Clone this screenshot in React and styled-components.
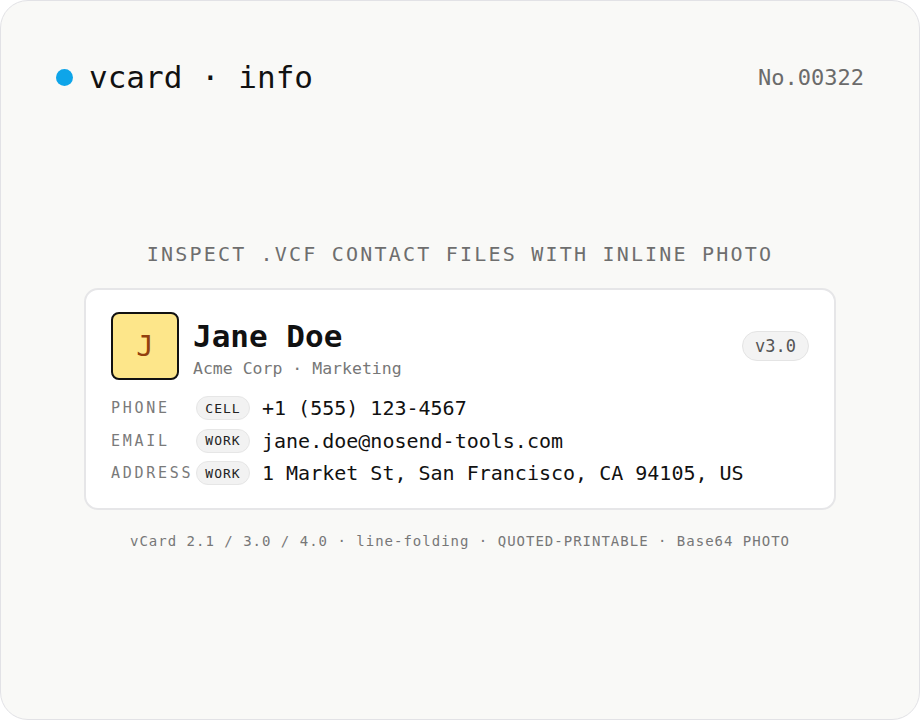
import styled, { createGlobalStyle } from "styled-components";

const mono = `"DejaVu Sans Mono", "Liberation Mono", monospace`;

const GlobalStyle = createGlobalStyle`
  html, body {
    margin: 0;
    padding: 0;
    background: #ffffff;
  }
  * {
    box-sizing: border-box;
  }
`;

const rows = [
  { label: "PHONE", tag: "CELL", value: "+1 (555) 123-4567" },
  { label: "EMAIL", tag: "WORK", value: "jane.doe@nosend-tools.com" },
  { label: "ADDRESS", tag: "WORK", value: "1 Market St, San Francisco, CA 94105, US" },
];

export default function App() {
  return (
    <>
      <GlobalStyle />
      <Frame>
        <Header>
          <Brand>
            <Dot />
            vcard · info
          </Brand>
          <Serial>No.00322</Serial>
        </Header>

        <Main>
          <Tagline>INSPECT .VCF CONTACT FILES WITH INLINE PHOTO</Tagline>

          <Card>
            <CardTop>
              <Avatar>J</Avatar>
              <Identity>
                <Name>Jane Doe</Name>
                <Org>Acme Corp · Marketing</Org>
              </Identity>
              <Version>v3.0</Version>
            </CardTop>

            <Fields>
              {rows.map((r) => (
                <Field key={r.label}>
                  <FieldLabel>{r.label}</FieldLabel>
                  <Tag>{r.tag}</Tag>
                  <FieldValue>{r.value}</FieldValue>
                </Field>
              ))}
            </Fields>
          </Card>

          <Footnote>
            vCard 2.1 / 3.0 / 4.0 · line-folding · QUOTED-PRINTABLE · Base64 PHOTO
          </Footnote>
        </Main>
      </Frame>
    </>
  );
}

const Frame = styled.div`
  width: 920px;
  height: 720px;
  background: #f9f9f7;
  border: 1px solid #e2e2e6;
  border-radius: 28px;
  padding: 57px 55px 0;
  font-family: ${mono};
  color: #111111;
  display: flex;
  flex-direction: column;
`;

const Header = styled.header`
  display: flex;
  align-items: center;
  justify-content: space-between;
  height: 38px;
`;

const Brand = styled.div`
  display: flex;
  align-items: center;
  gap: 16px;
  font-size: 31px;
  line-height: 38px;
  color: #111111;
`;

const Dot = styled.span`
  width: 17px;
  height: 17px;
  border-radius: 50%;
  background: #0ea5e9;
`;

const Serial = styled.div`
  font-size: 22px;
  color: #6b6b6b;
`;

const Main = styled.main`
  margin-top: 146px;
  display: flex;
  flex-direction: column;
  align-items: center;
`;

const Tagline = styled.div`
  font-size: 20px;
  line-height: 24px;
  letter-spacing: 2.2px;
  color: #6e6e6e;
`;

const Card = styled.section`
  margin-top: 22px;
  width: 752px;
  background: #ffffff;
  border: 2px solid #e6e6e8;
  border-radius: 14px;
  padding: 22px 25px 23px;
`;

const CardTop = styled.div`
  display: flex;
  align-items: center;
  gap: 14px;
`;

const Avatar = styled.div`
  width: 68px;
  height: 68px;
  flex-shrink: 0;
  border: 2px solid #111111;
  border-radius: 8px;
  background: #fde68a;
  color: #92400e;
  display: flex;
  align-items: center;
  justify-content: center;
  font-size: 29px;
`;

const Identity = styled.div`
  flex: 1;
  display: flex;
  flex-direction: column;
  margin-top: 2px;
`;

const Name = styled.div`
  font-size: 31px;
  font-weight: 700;
  line-height: 40px;
`;

const Org = styled.div`
  margin-top: 3px;
  font-size: 16.5px;
  line-height: 20px;
  color: #777777;
`;

const Version = styled.span`
  align-self: center;
  height: 30px;
  padding: 0 12px;
  border-radius: 15px;
  background: #f3f3f3;
  border: 1px solid #e4e4e4;
  color: #555555;
  font-size: 17px;
  display: flex;
  align-items: center;
`;

const Fields = styled.div`
  margin-top: 16px;
  display: flex;
  flex-direction: column;
  gap: 8.5px;
`;

const Field = styled.div`
  display: flex;
  align-items: center;
  height: 24px;
`;

const FieldLabel = styled.span`
  width: 85px;
  font-size: 15px;
  letter-spacing: 2.7px;
  color: #7a7a7a;
  white-space: nowrap;
`;

const Tag = styled.span`
  width: 54px;
  height: 24px;
  border-radius: 12px;
  background: #f2f2f2;
  border: 1px solid #e6e6e6;
  color: #222222;
  font-size: 13px;
  letter-spacing: 1px;
  display: flex;
  align-items: center;
  justify-content: center;
`;

const FieldValue = styled.span`
  margin-left: 12px;
  font-size: 20px;
  line-height: 24px;
  color: #111111;
  white-space: nowrap;
`;

const Footnote = styled.div`
  margin-top: 22px;
  font-size: 14px;
  line-height: 18px;
  letter-spacing: 1px;
  color: #777777;
`;
